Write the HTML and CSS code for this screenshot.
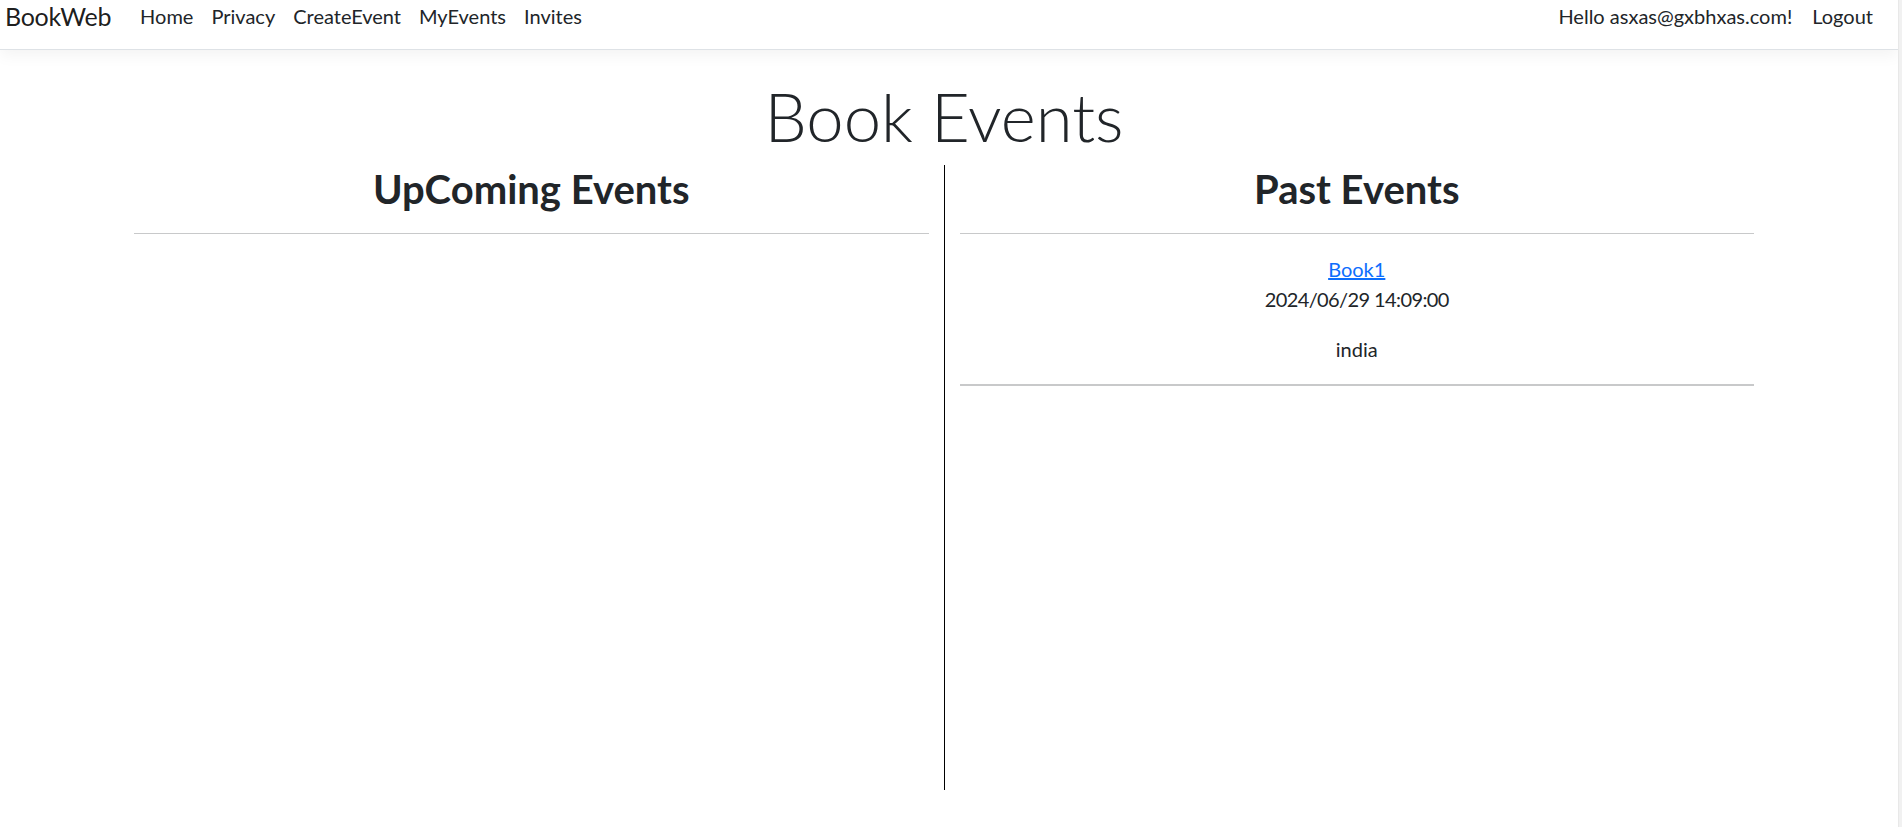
FILE: index.html
```html
<!DOCTYPE html>
<html lang="en">
<head>
<meta charset="utf-8">
<title>Book Events - BookWeb</title>
<link rel="stylesheet" href="styles.css">
</head>
<body>
<div class="page">
  <div class="content">
    <nav class="navbar">
      <a class="brand" href="#">BookWeb</a>
      <ul class="nav-links">
        <li><a href="#">Home</a></li>
        <li><a href="#">Privacy</a></li>
        <li><a href="#">CreateEvent</a></li>
        <li><a href="#">MyEvents</a></li>
        <li><a href="#">Invites</a></li>
      </ul>
      <ul class="nav-links nav-right">
        <li><a href="#">Hello asxas@gxbhxas.com!</a></li>
        <li><a href="#">Logout</a></li>
      </ul>
    </nav>
    <main class="main">
      <div class="container">
        <h1 class="title">Book Events</h1>
        <div class="row">
          <section class="col">
            <h2 class="col-title">UpComing Events</h2>
            <hr class="rule">
          </section>
          <div class="divider"></div>
          <section class="col">
            <h2 class="col-title">Past Events</h2>
            <hr class="rule">
            <p class="event"><a href="#">Book1</a><br><span class="event-date">2024/06/29 14:09:00</span></p>
            <p class="event">india</p>
            <hr class="rule rule-thick">
          </section>
        </div>
      </div>
    </main>
  </div>
  <div class="scrollbar"></div>
</div>
</body>
</html>
```
FILE: styles.css
```css
* { box-sizing: border-box; }
html, body { margin: 0; padding: 0; }
body {
  font-family: Lato, "Open Sans", sans-serif;
  font-size: 20px;
  line-height: 1.5;
  color: #212529;
  background: #fff;
}
.page {
  display: flex;
  min-height: 827px;
}
.content {
  flex: 1;
  min-width: 0;
}
.scrollbar {
  width: 4px;
  background: #f1f1f1;
  border-left: 1px solid #e8e8e8;
}
.navbar {
  display: flex;
  align-items: flex-start;
  height: 50px;
  padding: 0 15px 0 5px;
  border-bottom: 1px solid #dee2e6;
  box-shadow: 0 5px 15px rgba(0, 0, 0, 0.05);
}
.brand {
  font-size: 25px;
  line-height: 32px;
  letter-spacing: -0.3px;
  color: rgba(0, 0, 0, 0.9);
  text-decoration: none;
  margin-right: 20px;
}
.nav-links {
  display: flex;
  list-style: none;
  margin: 0;
  padding: 0;
}
.nav-links a {
  display: block;
  padding: 0 9px;
  line-height: 32px;
  color: #212529;
  text-decoration: none;
}
.nav-right { margin-left: auto; }
.nav-right a { padding: 0 10px; }
.main { padding-right: 10px; }
.container {
  width: 1620px;
  margin: 0 auto;
}
.title {
  margin: 24px 0 7px;
  font-size: 67px;
  font-weight: 300;
  line-height: 84px;
  text-align: center;
}
.row {
  display: grid;
  grid-template-columns: 1fr 1px 1fr;
  column-gap: 15px;
}
.divider {
  height: 625px;
  background: #000;
}
.col { text-align: center; }
.col-title {
  margin: 0;
  font-size: 40px;
  font-weight: 700;
  line-height: 1.2;
}
.rule {
  margin: 20px 0;
  border: 0;
  border-top: 1px solid #c8c9ca;
}
.rule-thick { border-top-width: 2px; }
.event { margin: 0 0 20px; }
.event a { color: #0d6efd; }
.event-date { letter-spacing: -0.6px; }
```
